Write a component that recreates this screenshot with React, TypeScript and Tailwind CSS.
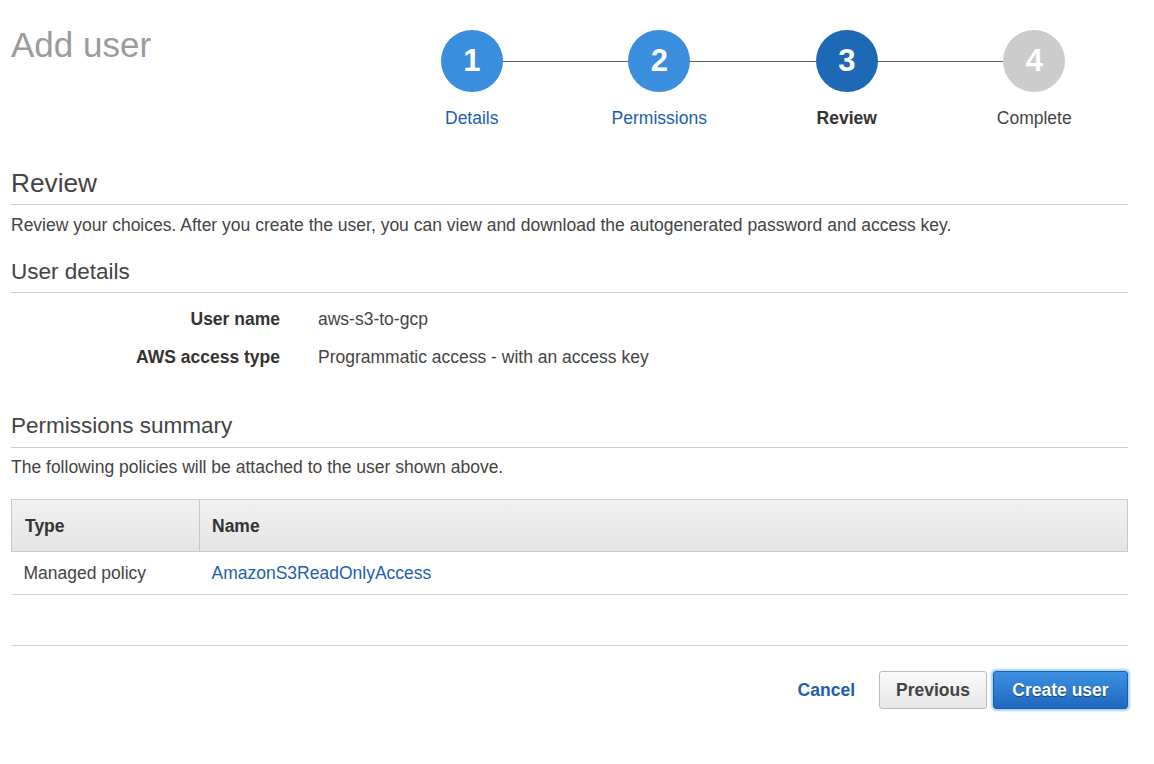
const steps = [
  { n: 1, label: "Details", state: "done" },
  { n: 2, label: "Permissions", state: "done" },
  { n: 3, label: "Review", state: "current" },
  { n: 4, label: "Complete", state: "todo" },
] as const;

function Stepper() {
  return (
    <div className="grid w-[750px] grid-cols-4 pt-[30px]">
      {steps.map((s, i) => (
        <div key={s.n} className="flex flex-col items-center">
          <div className="relative flex h-[62px] w-full items-center justify-center">
            {i > 0 && (
              <div className="absolute left-0 right-1/2 top-[31px] h-px bg-[#5f6368]" />
            )}
            {i < steps.length - 1 && (
              <div className="absolute left-1/2 right-0 top-[31px] h-px bg-[#5f6368]" />
            )}
            <div
              className={
                s.state === "done"
                  ? "relative z-10 flex size-[62px] items-center justify-center rounded-full bg-[#3b8ddd] text-[31px] font-bold text-white"
                  : s.state === "current"
                    ? "relative z-10 flex size-[62px] items-center justify-center rounded-full bg-[#1e69b5] text-[31px] font-bold text-white"
                    : "relative z-10 flex size-[62px] items-center justify-center rounded-full bg-[#cccccc] text-[31px] font-bold text-white"
              }
            >
              {s.n}
            </div>
          </div>
          <div
            className={
              s.state === "done"
                ? "mt-[14px] text-[17.5px] leading-[24px] text-[#1b5fae]"
                : s.state === "current"
                  ? "mt-[14px] text-[17.5px] font-bold leading-[24px] text-[#333]"
                  : "mt-[14px] text-[17.5px] leading-[24px] text-[#444]"
            }
          >
            {s.label}
          </div>
        </div>
      ))}
    </div>
  );
}

const details = [
  { label: "User name", value: "aws-s3-to-gcp" },
  { label: "AWS access type", value: "Programmatic access - with an access key" },
];

export default function App() {
  return (
    <div
      className="min-h-[764px] w-[1154px] bg-white pl-[11px] pr-[26px] text-[#444]"
      style={{ fontFamily: '"Liberation Sans", Arial, Helvetica, sans-serif' }}
    >
      <div className="flex items-start justify-between">
        <h1 className="pt-[25px] text-[35px] leading-[40px] font-normal text-[#9b9b9b]">
          Add user
        </h1>
        <Stepper />
      </div>

      <h2 className="mt-[37px] border-b border-[#cccccc] pb-[5px] text-[26.25px] leading-[32px] text-[#444]">
        Review
      </h2>
      <p className="mt-[8px] text-[17.5px] leading-[24px]">
        Review your choices. After you create the user, you can view and download the
        autogenerated password and access key.
      </p>

      <h3 className="mt-[21px] border-b border-[#cccccc] pb-[6px] text-[22.5px] leading-[28px] text-[#444]">
        User details
      </h3>
      <div className="mt-[14px] grid grid-cols-[269px_1fr] gap-x-[38px] gap-y-[14px] text-[17.5px] leading-[24px]">
        {details.map((d) => (
          <div key={d.label} className="contents">
            <div className="text-right font-bold text-[#333]">{d.label}</div>
            <div className="text-[#444]">{d.value}</div>
          </div>
        ))}
      </div>

      <h3 className="mt-[43px] border-b border-[#cccccc] pb-[7px] text-[22.5px] leading-[28px] text-[#444]">
        Permissions summary
      </h3>
      <p className="mt-[7px] text-[17.5px] leading-[24px]">
        The following policies will be attached to the user shown above.
      </p>

      <table className="mt-[20px] w-full border-collapse text-[17.5px] leading-[24px]">
        <thead>
          <tr className="bg-gradient-to-b from-[#f1f1f1] to-[#e4e4e4]">
            <th className="h-[52px] w-[188px] border border-[#c8c8c8] pl-[13px] text-left font-bold text-[#333]">
              Type
            </th>
            <th className="h-[52px] border border-[#c8c8c8] pl-[12px] text-left font-bold text-[#333]">
              Name
            </th>
          </tr>
        </thead>
        <tbody>
          <tr className="border-b border-[#d5d5d5]">
            <td className="h-[43px] pl-[12px] text-[#444]">Managed policy</td>
            <td className="h-[43px] pl-[12px] text-[#1b5fae]">AmazonS3ReadOnlyAccess</td>
          </tr>
        </tbody>
      </table>

      <div className="mt-[50px] border-t border-[#d5d5d5]" />

      <div className="mt-[25px] flex items-center justify-end">
        <button className="mr-[24px] text-[17.5px] font-bold text-[#1b5fae]">Cancel</button>
        <button className="h-[38px] w-[108px] rounded-[3px] border border-[#bcbcbc] bg-gradient-to-b from-[#fbfbfb] to-[#e6e6e6] text-[17.5px] font-bold text-[#444]">
          Previous
        </button>
        <button className="ml-[6px] h-[38px] w-[135px] rounded-[3px] border border-[#1a5ea6] bg-gradient-to-b from-[#3c91e2] to-[#1f68bd] text-[17.5px] font-bold text-white shadow-[0_0_2px_2px_#a9d0f5] [text-shadow:0_1px_1px_rgba(0,0,0,0.45)]">
          Create user
        </button>
      </div>
    </div>
  );
}
